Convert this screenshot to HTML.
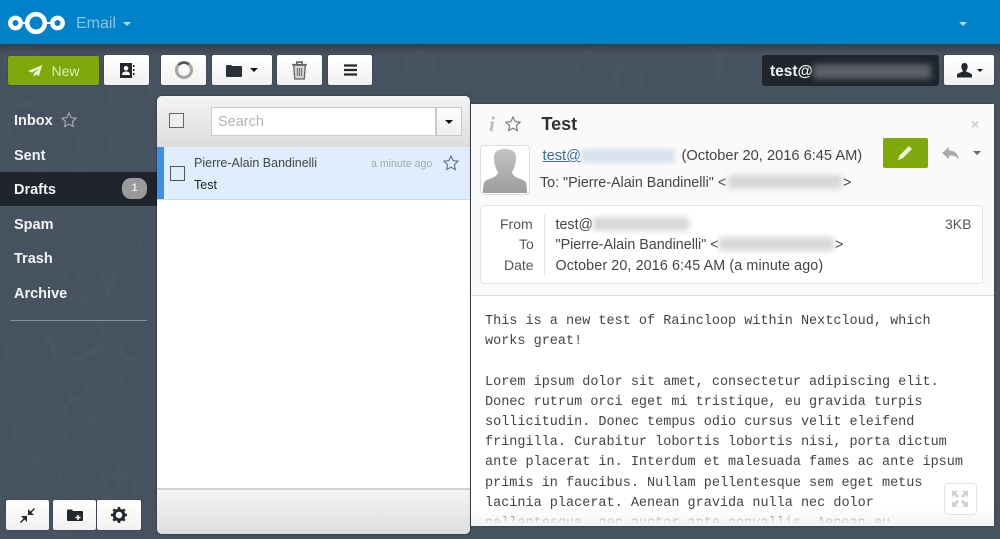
<!DOCTYPE html>
<html><head><meta charset="utf-8"><style>
html,body{margin:0;padding:0}
body{width:1000px;height:539px;overflow:hidden;position:relative;background:#475260;font-family:"Liberation Sans",sans-serif;color:#333}
#w{position:absolute;left:0;top:0;width:1000px;height:539px;overflow:hidden;filter:blur(.3px)}
.a{position:absolute}
.btn{position:absolute;top:55px;height:30px;background:linear-gradient(#fff,#f1f1f1);border-radius:2px;box-shadow:0 0 1px rgba(0,0,0,.5);display:flex;align-items:center;justify-content:center}
.nav{position:absolute;left:14px;color:#f2f3f4;font-weight:bold;font-size:14.5px;line-height:20px}
.b{position:absolute;filter:blur(3px);border-radius:2px}
.t{position:absolute;white-space:nowrap}
</style></head><body><div id="w">
<svg class="a" style="left:0;top:0;filter:blur(1px)" width="1000" height="539" fill="none" stroke="#fff" stroke-opacity=".017">
<g stroke-width="5"><circle cx="90" cy="275" r="25"/><circle cx="90" cy="275" r="12"/><circle cx="120" cy="285" r="13"/><circle cx="75" cy="330" r="28"/><circle cx="105" cy="385" r="36"/><circle cx="105" cy="385" r="18"/><circle cx="80" cy="412" r="15"/><circle cx="30" cy="355" r="24"/><circle cx="90" cy="475" r="30"/><circle cx="90" cy="475" r="14"/><circle cx="120" cy="488" r="15"/><circle cx="40" cy="435" r="26"/><circle cx="30" cy="125" r="22"/><circle cx="60" cy="190" r="30"/><circle cx="95" cy="145" r="17"/><circle cx="597" cy="69" r="20"/><circle cx="703" cy="65" r="18"/><circle cx="733" cy="65" r="17"/><circle cx="629" cy="80" r="13"/><circle cx="420" cy="65" r="14"/><circle cx="830" cy="60" r="16"/><circle cx="20" cy="60" r="14"/><circle cx="130" cy="95" r="20"/></g>
<g stroke-width="3"><circle cx="130" cy="350" r="9"/><circle cx="35" cy="470" r="7"/><circle cx="25" cy="95" r="10"/><circle cx="130" cy="245" r="10"/><circle cx="60" cy="520" r="14"/></g>
</svg>

<div class="a" style="left:0;top:44px;width:1000px;height:10px;background:linear-gradient(rgba(20,25,35,.35),rgba(20,25,35,0))"></div>
<div class="a" style="left:0;top:0;width:1000px;height:44px;background:#0082c9"></div>
<svg class="a" style="left:8px;top:11px" width="60" height="24" fill="none" stroke="#fff"><circle cx="7.500" cy="12" r="5.200" stroke-width="4.400"/><circle cx="28" cy="12" r="8.800" stroke-width="4.600"/><circle cx="49.500" cy="12" r="5.200" stroke-width="4.400"/><path d="M13 12h4M39 12h5" stroke-width="2"/></svg>
<div class="t" style="left:76px;top:14px;font-size:16px;line-height:20px;color:#8cc4e6">Email</div>
<div class="a" style="left:123px;top:22px;border:4px solid transparent;border-top-color:#b5d9ef;border-bottom:0"></div>
<div class="a" style="left:959px;top:22px;border:4px solid transparent;border-top-color:#b5d9ef;border-bottom:0"></div>

<div class="btn" style="left:8px;top:56px;width:91px;height:29px;background:#7fa90a;color:#dfeabd;font-size:14px"><svg width="15" height="12" viewBox="0 0 18 14" style="margin-right:8px;margin-left:1px"><path fill="#eef5d8" d="M17 0 0 7l5 2 9-6-7 7v4l3-3 3 2z"/></svg>New</div>
<div class="btn" style="left:104px;width:45px"><svg width="16" height="15" viewBox="0 0 16 15"><path fill="#23272e" fill-rule="evenodd" d="M1 0h12v15H1zM7 3a2.300 2.300 0 1 0 .01 0zM3 12h8c0-2.300-1.200-3.500-4-3.500S3 9.700 3 12z"/><path fill="#23272e" d="M14 2h1.500v2H14zM14 6h1.500v2H14zM14 10h1.500v2H14z"/></svg></div>
<div class="btn" style="left:161px;width:45px"><svg width="20" height="20"><circle cx="10" cy="10" r="7.500" fill="none" stroke="#a8a8a8" stroke-width="3.200"/><path d="M4.500 5A7.500 7.500 0 0 1 15 4.500" fill="none" stroke="#555" stroke-width="2.200"/></svg></div>
<div class="btn" style="left:212px;width:60px"><svg width="16" height="13" viewBox="0 0 16 13"><path fill="#2a2e35" d="M0 2q0-1 1-1h4l1 1h9q1 0 1 1v9q0 1-1 1H1q-1 0-1-1z"/></svg><span style="margin-left:8px;border:4px solid transparent;border-top-color:#111;border-bottom:0"></span></div>
<div class="btn" style="left:277px;width:45px"><svg width="17" height="19" viewBox="0 0 16 18" fill="none" stroke="#666"><path d="M1 3.500h14M5.500 3V1h5v2" stroke-width="1.500"/><path d="M2.500 4l1 13h9l1-13z" fill="#dadada" stroke-width="1.300"/><path d="M6 6.500v8M8 6.500v8M10 6.500v8" stroke-width="1"/></svg></div>
<div class="btn" style="left:328px;width:44px"><svg width="13" height="12"><path d="M0 1.500h13M0 6h13M0 10.500h13" stroke="#23272e" stroke-width="2.300"/></svg></div>

<div class="a" style="left:762px;top:55px;width:177px;height:31px;background:#20252d;border-radius:3px"></div>
<div class="t" style="left:770px;top:63px;color:#f0f0f0;font-size:15.500px;line-height:18px;font-weight:bold">test@</div>
<div class="b" style="left:813px;top:64px;width:118px;height:15px;background:#5a6069"></div>
<div class="btn" style="left:944px;width:50px"><svg width="17" height="15" viewBox="0 0 17 15"><path fill="#23272e" d="M8.500 0c2.500 0 3.500 2 3 5-.3 1.500-1 2.500-1.500 3 0 1 4 1.500 6 3.500V14.500H1V11.500c2-2 6-2.500 6-3.500-.5-.5-1.200-1.500-1.500-3-.5-3 .5-5 3-5z"/></svg><span style="margin-left:4px;border:3.500px solid transparent;border-top-color:#111;border-bottom:0"></span></div>

<div class="a" style="left:0;top:172px;width:157px;height:34px;background:#20252d"></div>
<div class="nav" style="top:111px">Inbox</div>
<svg class="a" style="left:61px;top:112px" width="16" height="16" viewBox="0 0 16 16"><path d="M8 1l2.100 4.600 5 .6-3.700 3.400 1 5L8 12.100 3.600 14.600l1-5L.9 6.200l5-.6z" fill="none" stroke="#a8adb4" stroke-width="1.100"/></svg>
<div class="nav" style="top:146px">Sent</div>
<div class="nav" style="top:180px">Drafts</div>
<div class="a" style="left:122px;top:178px;width:25px;height:21px;border-radius:9px;background:#9a9a9a;color:#e4e4e4;font-size:11px;font-weight:bold;line-height:21px;text-align:center">1</div>
<div class="nav" style="top:215px">Spam</div>
<div class="nav" style="top:249px">Trash</div>
<div class="nav" style="top:284px">Archive</div>
<div class="a" style="left:10px;top:320px;width:137px;height:1px;background:#8a919a"></div>

<div class="btn" style="left:6px;top:500px;width:43px;background:linear-gradient(#fff,#f0f0f0)"><svg width="15" height="15" viewBox="0 0 15 15"><path fill="#23272e" d="M14 0l1 1-3.500 3.500L14 7H8V1l2.500 2.500zM1 15l-1-1 3.500-3.500L1 8h6v6l-2.500-2.500z"/></svg></div>
<div class="btn" style="left:53px;top:500px;width:43px"><svg width="16" height="13" viewBox="0 0 16 13"><path fill="#23272e" d="M0 1.500q0-1 1-1h4l1 1.500h9q1 0 1 1v8q0 1-1 1H1q-1 0-1-1z"/><path d="M8.500 8.500h5M11 6v5" stroke="#fff" stroke-width="1.500"/></svg></div>
<div class="btn" style="left:97px;top:500px;width:44px"><svg width="16" height="16" viewBox="0 0 16 16"><circle cx="8" cy="8" r="4.800" fill="none" stroke="#23272e" stroke-width="3"/><path d="M8 0v3M8 13v3M0 8h3M13 8h3M2.300 2.300l2.100 2.100M11.600 11.600l2.100 2.100M2.300 13.700l2.100-2.100M11.600 4.400l2.100-2.100" stroke="#23272e" stroke-width="2.600"/></svg></div>

<div class="a" style="left:157px;top:96px;width:313px;height:438px;background:#fff;border-radius:5px;overflow:hidden;box-shadow:0 0 2px rgba(0,0,0,.5)">
 <div class="a" style="left:0;top:0;width:313px;height:51px;background:linear-gradient(#f4f4f4,#dcdcdc)"></div>
 <div class="a" style="left:12px;top:17px;width:13px;height:13px;border:1px solid #666;background:#eee"></div>
 <div class="a" style="left:54px;top:11px;width:225px;height:29px;background:#fff;border:1px solid #ccc;box-sizing:border-box"></div>
 <div class="t" style="left:61px;top:17px;font-size:14.500px;line-height:18px;color:#b4b4b4">Search</div>
 <div class="a" style="left:279px;top:11px;width:26px;height:29px;background:linear-gradient(#fff,#eee);border:1px solid #c8c8c8;box-sizing:border-box"></div>
 <div class="a" style="left:288px;top:24px;border:4px solid transparent;border-top-color:#111;border-bottom:0"></div>
 <div class="a" style="left:0;top:51px;width:313px;height:53px;background:#dfeefc;border-bottom:1px solid #c6dcee;box-sizing:border-box"></div>
 <div class="a" style="left:0;top:51px;width:7px;height:52px;background:#3d8fe8"></div>
 <div class="a" style="left:13px;top:70px;width:13px;height:13px;border:1px solid #555"></div>
 <div class="t" style="left:37px;top:59px;font-size:12.500px;line-height:16px;color:#444">Pierre-Alain Bandinelli</div>
 <div class="t" style="left:37px;top:81px;font-size:12.500px;line-height:16px;color:#222">Test</div>
 <div class="t" style="left:214px;top:61px;font-size:10.600px;line-height:14px;color:#a3a9b0">a minute ago</div>
 <svg class="a" style="left:286px;top:59px" width="16" height="16" viewBox="0 0 16 16"><path d="M8 1l2.100 4.600 5 .6-3.700 3.400 1 5L8 12.100 3.600 14.600l1-5L.9 6.200l5-.6z" fill="none" stroke="#6a7078" stroke-width="1.100"/></svg>
 <div class="a" style="left:0;top:392px;width:313px;height:46px;background:linear-gradient(#f4f4f4,#dedede);border-top:2px solid #d4d4d4;box-sizing:border-box"></div>
</div>

<div class="a" style="left:471px;top:104px;width:523px;height:422px;background:#fff;overflow:hidden;box-shadow:0 0 2px rgba(0,0,0,.4)">
 <div class="a" style="left:0;top:0;width:523px;height:191px;background:#fafafa;border-bottom:1px solid #ddd"></div>
 <div class="t" style="left:18px;top:8px;font:italic bold 21px/24px 'Liberation Serif',serif;color:#bbb">i</div>
 <svg class="a" style="left:34px;top:12px" width="16" height="16" viewBox="0 0 16 16"><path d="M8 1l2.100 4.600 5 .6-3.700 3.400 1 5L8 12.100 3.600 14.600l1-5L.9 6.200l5-.6z" fill="none" stroke="#777" stroke-width="1.100"/></svg>
 <div class="t" style="left:70.500px;top:9px;font-weight:bold;font-size:18px;line-height:22px;color:#333">Test</div>
 <div class="t" style="left:500px;top:12px;font-weight:bold;font-size:14px;line-height:16px;color:#ccc">×</div>
 <div class="a" style="left:9px;top:41px;width:48px;height:48px;border:1px solid #ddd;border-radius:4px;background:#fff;overflow:hidden">
  <svg width="48" height="48" viewBox="0 0 48 48"><defs><linearGradient id="g" x1="0" y1="0" x2="0" y2="1"><stop offset="0" stop-color="#c4c4c4"/><stop offset="1" stop-color="#9c9c9c"/></linearGradient></defs><path fill="url(#g)" d="M24 3c8 0 11 3 11 9 0 6-2 11-4 14 0 4 6 6 11 8 3 1 4 4 4 13H2c0-9 1-12 4-13 5-2 11-4 11-8-2-3-4-8-4-14 0-6 3-9 11-9z"/></svg>
 </div>
 <div class="t" style="left:71.500px;top:43px;font-size:14.650px;line-height:18px;color:#3a6d9e;text-decoration:underline">test@</div>
 <div class="b" style="left:110px;top:45px;width:94px;height:14px;background:#d9e3ef;filter:blur(2px)"></div>
 <div class="t" style="left:210.500px;top:43px;font-size:14.650px;line-height:18px;color:#444">(October 20, 2016 6:45 AM)</div>
 <div class="t" style="left:69px;top:70px;font-size:14.300px;line-height:18px;color:#444">To: "Pierre-Alain Bandinelli" &lt;</div>
 <div class="b" style="left:257px;top:71px;width:114px;height:14px;background:#d8d8d8"></div>
 <div class="t" style="left:372px;top:70px;font-size:14.300px;line-height:18px;color:#444">&gt;</div>
 <div class="a" style="left:412px;top:34px;width:45px;height:30px;background:#7fa90a;border-radius:2px"></div>
 <svg class="a" style="left:426px;top:41px" width="16" height="16" viewBox="0 0 16 16"><path fill="#eef5d8" d="M12 1l3 3-9.500 9.500-4.500 1.500 1.500-4.500z"/></svg>
 <svg class="a" style="left:470px;top:42px" width="19" height="15" viewBox="0 0 19 15"><path fill="#aaa" d="M8 1v3.500c6 0 9 3 10 9.500-2-3.500-5-4.500-10-4.500V13L1 7z"/></svg>
 <div class="a" style="left:502px;top:47px;border:4px solid transparent;border-top-color:#666;border-bottom:0"></div>

 <div class="a" style="left:9px;top:101px;width:503px;height:79px;background:#fff;border:1px solid #e4e4e4;border-radius:4px;box-sizing:border-box"></div>
 <div class="a" style="left:73px;top:110px;width:1px;height:61px;background:#e2e2e2"></div>
 <div class="t" style="left:29px;top:111px;font-size:14px;line-height:18px;color:#555">From</div>
 <div class="t" style="left:48px;top:131px;font-size:14px;line-height:18px;color:#555">To</div>
 <div class="t" style="left:33px;top:152px;font-size:14px;line-height:18px;color:#555">Date</div>
 <div class="t" style="left:84.500px;top:112px;font-size:14.300px;line-height:18px;color:#444">test@</div>
 <div class="b" style="left:122px;top:113px;width:96px;height:14px;background:#d8d8d8"></div>
 <div class="t" style="left:84.500px;top:132px;font-size:14.300px;line-height:18px;color:#444">"Pierre-Alain Bandinelli" &lt;</div>
 <div class="b" style="left:248px;top:133px;width:115px;height:14px;background:#d8d8d8"></div>
 <div class="t" style="left:364px;top:132px;font-size:14.300px;line-height:18px;color:#444">&gt;</div>
 <div class="t" style="left:84.500px;top:153px;font-size:14.300px;letter-spacing:.12px;line-height:18px;color:#444">October 20, 2016 6:45 AM (a minute ago)</div>
 <div class="t" style="left:474px;top:111px;font-size:14px;line-height:18px;color:#555">3KB</div>

 <pre class="a" style="left:14px;top:208px;margin:0;font:13.500px/20.200px 'Liberation Mono',monospace;color:#444">This is a new test of Raincloop within Nextcloud, which
works great!

Lorem ipsum dolor sit amet, consectetur adipiscing elit.
Donec rutrum orci eget mi tristique, eu gravida turpis
sollicitudin. Donec tempus odio cursus velit eleifend
fringilla. Curabitur lobortis lobortis nisi, porta dictum
ante placerat in. Interdum et malesuada fames ac ante ipsum
primis in faucibus. Nullam pellentesque sem eget metus
lacinia placerat. Aenean gravida nulla nec dolor
pellentesque, nec auctor ante convallis. Aenean eu</pre>
 <div class="a" style="left:0;top:404px;width:523px;height:18px;background:linear-gradient(rgba(255,255,255,0),#f4f4f4 85%)"></div>
 <div class="a" style="left:473px;top:379px;width:33px;height:32px;background:rgba(255,255,255,.85);border:1px solid #e2e2e2;border-radius:4px;box-sizing:border-box"></div>
 <svg class="a" style="left:481px;top:387px" width="16" height="16" viewBox="0 0 16 16" fill="#d0d0d0"><path d="M0 0h6L4 2l3 3-2 2-3-3-2 2zM16 0v6l-2-2-3 3-2-2 3-3-2-2zM0 16v-6l2 2 3-3 2 2-3 3 2 2zM16 16h-6l2-2-3-3 2-2 3 3 2-2z"/></svg>
</div>
</div></body></html>
